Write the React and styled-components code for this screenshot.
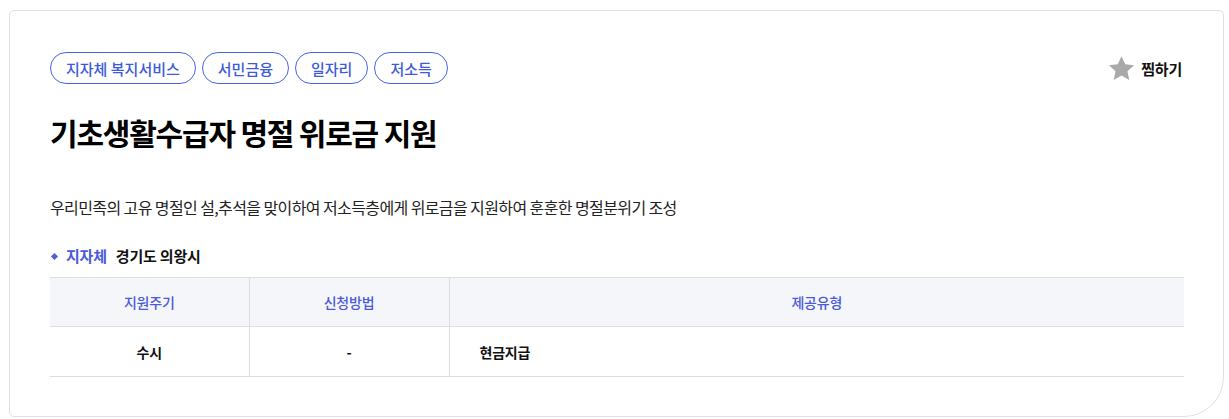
import styled, { createGlobalStyle } from 'styled-components';

const GlobalStyle = createGlobalStyle`
  body {
    margin: 0;
    background: #fff;
    font-family: "Noto Sans CJK KR", "Noto Sans", sans-serif;
    color: #111;
  }
`;

const Page = styled.div`
  padding: 10px 5px 2px 9px;
`;

const Card = styled.section`
  box-sizing: border-box;
  width: 1215px;
  height: 407px;
  border: 1px solid #e0e0e0;
  border-radius: 5px 5px 40px 5px;
  padding: 41px 39px 0 40px;
`;

const TopRow = styled.div`
  display: flex;
  justify-content: space-between;
  align-items: center;
`;

const Tags = styled.div`
  display: flex;
  gap: 6px;
`;

const Tag = styled.span`
  box-sizing: border-box;
  height: 32px;
  padding: 0 15px;
  display: flex;
  align-items: center;
  border: 1px solid #4664e0;
  border-radius: 16px;
  color: #3d5bd9;
  font-size: 15px;
  font-weight: 500;
  letter-spacing: 0;
`;

const LikeButton = styled.button`
  display: flex;
  align-items: center;
  gap: 6px;
  margin-right: 2px;
  border: 0;
  background: none;
  padding: 0;
  font-family: inherit;
  font-size: 15px;
  font-weight: 700;
  color: #111;
  letter-spacing: -0.2px;
  cursor: pointer;
`;

const Title = styled.h2`
  margin: 28px 0 0;
  font-size: 30px;
  font-weight: 700;
  letter-spacing: -1.2px;
  line-height: 40px;
  color: #000;
`;

const Desc = styled.p`
  margin: 44px 0 0;
  font-size: 16px;
  line-height: 22px;
  letter-spacing: -0.6px;
  color: #222;
`;

const Region = styled.div`
  display: flex;
  align-items: center;
  margin-top: 27px;
  font-size: 15px;
  font-weight: 700;
  letter-spacing: -0.2px;
  line-height: 22px;

  &::before {
    content: '';
    width: 5px;
    height: 5px;
    margin: 0 9px 0 2px;
    background: #4a5fd8;
    transform: rotate(45deg);
  }
`;

const RegionLabel = styled.span`
  color: #4a5ad8;
  margin-right: 9px;
`;

const Table = styled.table`
  width: 100%;
  margin-top: 10px;
  border-collapse: collapse;
  table-layout: fixed;
  font-size: 14px;
  letter-spacing: -0.2px;
`;

const Th = styled.th`
  height: 48px;
  padding: 0;
  background: #f5f6fa;
  border-top: 1px solid #dedede;
  border-bottom: 1px solid #dedede;
  border-left: ${p => (p.$first ? '0' : '1px solid #dedede')};
  color: #4a5ad8;
  font-weight: 500;
  text-align: center;
`;

const Td = styled.td`
  height: 49px;
  border-bottom: 1px solid #dedede;
  border-left: ${p => (p.$first ? '0' : '1px solid #dedede')};
  text-align: ${p => p.$align || 'center'};
  padding: ${p => (p.$align === 'left' ? '0 0 0 30px' : '0')};
  font-weight: 700;
  color: #111;
`;

const Star = () => (
  <svg width="27" height="27" viewBox="0 0 24 24">
    <path
      fill="#a9a9a9"
      d="M12 1.2l3.3 7.1 7.8.9-5.8 5.3 1.6 7.7L12 18.3l-6.9 3.9 1.6-7.7L.9 9.2l7.8-.9z"
    />
  </svg>
);

const tags = ['지자체 복지서비스', '서민금융', '일자리', '저소득'];

export default function App() {
  return (
    <Page>
      <GlobalStyle />
      <Card>
        <TopRow>
          <Tags>
            {tags.map(t => (
              <Tag key={t}>{t}</Tag>
            ))}
          </Tags>
          <LikeButton>
            <Star />
            찜하기
          </LikeButton>
        </TopRow>
        <Title>기초생활수급자 명절 위로금 지원</Title>
        <Desc>
          우리민족의 고유 명절인 설,추석을 맞이하여 저소득층에게 위로금을 지원하여 훈훈한 명절분위기 조성
        </Desc>
        <Region>
          <RegionLabel>지자체</RegionLabel>
          경기도 의왕시
        </Region>
        <Table>
          <colgroup>
            <col style={{ width: '199px' }} />
            <col style={{ width: '200px' }} />
            <col />
          </colgroup>
          <thead>
            <tr>
              <Th $first>지원주기</Th>
              <Th>신청방법</Th>
              <Th>제공유형</Th>
            </tr>
          </thead>
          <tbody>
            <tr>
              <Td $first>수시</Td>
              <Td>-</Td>
              <Td $align="left">현금지급</Td>
            </tr>
          </tbody>
        </Table>
      </Card>
    </Page>
  );
}
